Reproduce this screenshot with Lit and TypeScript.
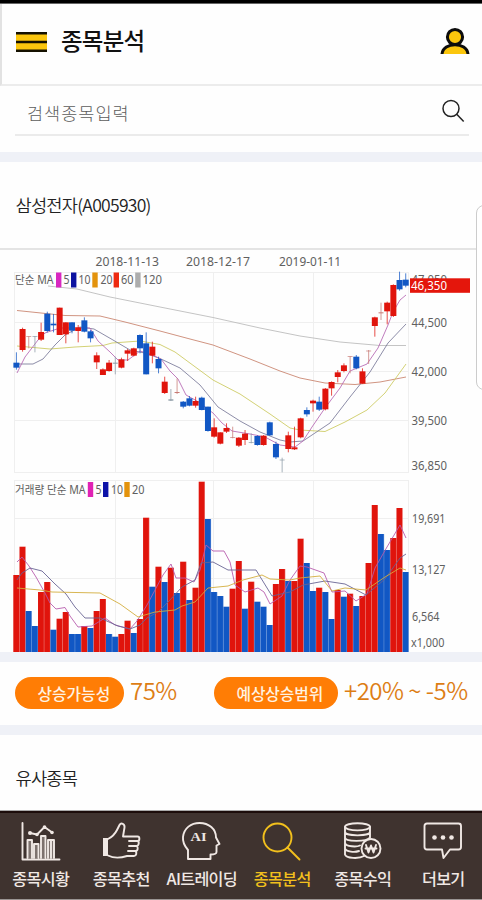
import { LitElement, html, svg, css } from "lit";
import { customElement, property } from "lit/decorators.js";
import { classMap } from "lit/directives/class-map.js";

type Side = "R" | "B";
type Pt = [number, number];

const RED = "#e0140c";
const BLUE = "#1157c4";
const LEFT = 13.3;
const STEP = 6.18;
const BASE = 652;

const volumes: [Side, number][] = [
  ["R", 575], ["R", 546.7], ["B", 611], ["B", 626], ["R", 592], ["R", 582], ["B", 629.7], ["R", 618.7],
  ["R", 612], ["B", 634], ["B", 634], ["R", 626], ["B", 628], ["R", 611], ["R", 599], ["B", 634],
  ["B", 636.7], ["R", 634], ["R", 620.7], ["B", 633], ["R", 619], ["R", 517.7], ["B", 586.7], ["R", 566.7],
  ["B", 582], ["R", 567.7], ["B", 593], ["R", 561.7], ["B", 600], ["R", 587.7], ["R", 481.7], ["B", 519],
  ["B", 592], ["B", 596], ["B", 606.7], ["R", 588.7], ["R", 561], ["B", 608.7], ["R", 581.7], ["B", 601.7],
  ["B", 606.7], ["B", 625], ["R", 584], ["R", 569], ["B", 581], ["R", 581], ["R", 538.7], ["B", 563],
  ["B", 591], ["R", 587.7], ["B", 592], ["B", 619], ["R", 590], ["B", 596.7], ["R", 593.7], ["B", 606],
  ["R", 596], ["R", 563], ["R", 505], ["B", 534], ["B", 550], ["R", 538], ["R", 508], ["B", 572],
];

/* side, body top, body bottom, wick top, wick bottom; thirds of a pixel below y=245 */
const candles: [Side | "r" | "g", number, number, number, number][] = [
  ["B", 353, 368, 322, 374], ["R", 252, 315, 248, 320], ["r", 274, 276, 274, 310], ["g", 274, 276, 273, 322],
  ["R", 261, 284, 233, 288], ["B", 206, 258, 200, 262], ["B", 236, 241, 207, 262], ["R", 188, 270, 188, 270],
  ["R", 232, 268, 232, 295], ["B", 232, 257, 232, 265], ["R", 247, 258, 240, 292], ["B", 226, 260, 217, 262],
  ["B", 259, 280, 255, 292], ["R", 331, 352, 322, 372], ["R", 373, 390, 370, 390], ["R", 353, 378, 345, 380],
  ["g", 353, 356, 335, 388], ["R", 343, 368, 338, 370], ["R", 316, 326, 312, 348], ["R", 310, 332, 308, 334],
  ["B", 270, 310, 268, 325], ["B", 295, 388, 262, 388], ["R", 305, 332, 290, 355], ["B", 342, 370, 335, 385],
  ["R", 410, 444, 395, 447], ["g", 463, 467, 432, 468], ["r", 441, 444, 400, 447], ["B", 470, 485, 468, 490],
  ["B", 460, 482, 453, 484], ["R", 468, 482, 455, 488], ["B", 458, 495, 455, 496], ["B", 485, 558, 485, 560],
  ["R", 547, 575, 520, 578], ["R", 562, 596, 562, 598], ["R", 549, 560, 535, 564], ["r", 576, 578, 545, 580],
  ["R", 578, 602, 576, 606], ["R", 566, 585, 555, 600], ["g", 592, 594, 565, 595], ["B", 573, 600, 571, 602],
  ["R", 572, 600, 570, 602], ["B", 532, 571, 530, 573], ["B", 597, 637, 590, 642], ["g", 644, 646, 638, 682],
  ["R", 571, 612, 560, 622], ["R", 607, 613, 545, 615], ["R", 520, 577, 518, 580], ["B", 495, 508, 487, 515],
  ["R", 467, 475, 464, 500], ["B", 470, 494, 455, 498], ["R", 431, 493, 429, 496], ["R", 411, 430, 409, 452],
  ["R", 382, 396, 375, 412], ["R", 361, 378, 355, 382], ["r", 334, 336, 334, 385], ["B", 335, 370, 330, 373],
  ["R", 379, 416, 370, 416], ["r", 317, 319, 315, 357], ["R", 217, 243, 215, 275], ["r", 202, 205, 173, 225],
  ["R", 173, 199, 170, 238], ["R", 120, 213, 118, 216], ["B", 105, 133, 80, 137], ["B", 104, 122, 85, 127],
];

const priceLines: [string, Pt[]][] = [
  ["#bcbcbc", [[48, 286], [77, 289], [110, 297], [160, 307], [213, 317.5], [260, 328], [300, 336], [340, 342], [380, 345.5], [406, 345.5]]],
  ["#c98570", [[17, 310.5], [65, 315.5], [100, 316], [125, 322], [160, 331], [190, 339], [213, 345], [250, 359], [280, 371], [300, 378], [325, 383], [355, 384.5], [380, 382], [406, 377]]],
  ["#cdcb62", [[17, 346], [50, 349], [75, 347], [103, 345.5], [112, 343], [140, 341], [160, 344.5], [175, 352], [213, 380], [240, 394], [270, 414], [290, 428], [300, 430], [325, 431.5], [345, 422], [367, 410], [385, 393], [406, 364]]],
  ["#7d7d9c", [[17, 364], [33, 364], [43, 359], [55, 345], [65, 335], [80, 327], [94, 329], [113, 340], [130, 350], [147, 353.5], [161, 359], [180, 368], [200, 385], [218, 407], [240, 421], [260, 432], [280, 440], [290, 442], [303, 441], [330, 423], [350, 397], [370, 372], [388, 343], [406, 324]]],
  ["#b76bb5", [[17, 373], [25, 357], [38, 340], [45, 333], [60, 328], [75, 328], [90, 328], [98, 341], [110, 352], [118, 360], [128, 360], [140, 351], [150, 354], [161, 359], [170, 371], [178, 379], [186, 395], [197, 401], [213, 413], [222, 423], [232, 431], [250, 434], [265, 437], [280, 445], [295, 447], [303, 441], [312, 427], [325, 408], [340, 388], [350, 371], [367, 364], [378, 348], [388, 325], [393, 312], [400, 300], [406, 295]]],
];

const volumeLines: [string, Pt[]][] = [
  ["#b65aac", [[17, 562], [22, 557], [29, 566], [36, 577], [45, 593], [50, 603], [56, 609], [65, 607.5], [70, 616], [78, 627], [92, 626], [105, 618], [115, 625], [130, 629], [137, 621], [147, 605], [155, 590], [163, 575], [171, 564], [176, 578], [185, 578], [194, 582], [200, 570], [206, 545], [213, 551], [224, 551], [230, 562], [235, 585], [245, 592], [258, 588], [264, 592], [270, 604], [282, 596], [290, 580], [300, 566], [307, 567], [324, 573], [332, 592], [345, 591], [356, 601], [367, 594], [375, 568], [387, 547], [400, 525], [406, 538]]],
  ["#666292", [[17, 580], [22, 573], [30, 568], [42, 571], [55, 584], [66, 594], [75, 607], [85, 618], [100, 618], [118, 626], [130, 629], [140, 625], [147, 618], [158, 612], [170, 600], [182, 587], [195, 580], [201, 563], [213, 562], [228, 570], [256, 570], [272, 596], [290, 592], [303, 585], [325, 581], [345, 584], [366, 595], [385, 579], [400, 558], [406, 554]]],
  ["#d3ac3a", [[17, 588], [40, 590], [52, 592], [100, 593], [120, 604], [138, 617], [155, 612], [175, 610], [182, 606], [195, 602], [208, 588], [228, 586], [243, 580], [262, 575], [270, 579], [290, 580], [300, 578], [320, 576], [332, 591], [345, 588], [366, 590], [385, 577], [400, 568], [406, 570]]],
];

/* text, x, baseline, width */
const axisTexts: [string, number, number, number][] = [
  ["2018-11-13", 95.5, 266, 63.5],
  ["2018-12-17", 186, 266, 64],
  ["2019-01-11", 279, 266, 62],
  ["44,500", 411.5, 327, 35.5],
  ["42,000", 411.5, 376, 35.5],
  ["39,500", 411.5, 425, 35.5],
  ["36,850", 411.5, 470, 35.5],
  ["19,691", 412, 523, 33.5],
  ["13,127", 412, 574, 33.5],
  ["6,564", 412, 621, 27.5],
  ["x1,000", 411, 646.5, 33.5],
  ["단순 MA", 15, 284, 38.5],
  ["5", 63.5, 284, 6],
  ["10", 78.5, 284, 12],
  ["20", 100.5, 284, 12],
  ["60", 121, 284, 12.5],
  ["120", 142.5, 284, 19.5],
  ["거래량 단순 MA", 15, 494, 70.5],
  ["5", 95.5, 494, 6],
  ["10", 111, 494, 12],
  ["20", 132, 494, 12.5],
];

const swatches: [string, number, number][] = [
  ["#d828c0", 56, 272.5], ["#0c12a0", 71, 272.5], ["#e3930d", 92.3, 272.5], ["#ee2a10", 113.6, 272.5], ["#adadad", 135.2, 272.5],
  ["#e022b4", 87.8, 482], ["#0c12a8", 103, 482], ["#e3930d", 124.3, 482],
];

const toPoints = (pts: Pt[]) => pts.map((p) => p.join(",")).join(" ");

@customElement("stock-chart")
class StockChart extends LitElement {
  static styles = css`
    :host { display: block; height: 402px; }
    svg { display: block; width: 482px; height: 402px; }
    text { font-family: "Noto Sans", "Noto Sans CJK KR", sans-serif; font-size: 11.7px; fill: #606060; }
    .grid { stroke: #efefef; stroke-width: 1; }
    .line { fill: none; stroke-width: 1; stroke-linejoin: round; opacity: 0.88; }
    .price { fill: #fff; font-size: 12px; }
  `;

  private candle(i: number) {
    const [side, top, bottom, wickTop, wickBottom] = candles[i];
    const x = LEFT + STEP * (i + 0.5);
    const y = (v: number) => 245 + v / 3;
    const fill = { R: RED, B: BLUE, r: "#c77a74", g: "#8b9aa5" }[side];
    const w = side === "r" || side === "g" ? 5 : 6;
    return svg`
      <rect x=${x - 0.5} y=${y(wickTop)} width="1" height=${(wickBottom - wickTop) / 3} fill=${fill} opacity="0.75"></rect>
      <rect x=${x - w / 2} y=${y(top)} width=${w} height=${(bottom - top) / 3} fill=${fill}></rect>`;
  }

  render() {
    return html`<svg viewBox="0 250 482 402">
      ${[14.5, 115.5, 213.5, 313.5, 408.5].map((x) => svg`
        <line class="grid" x1=${x} x2=${x} y1="272" y2="472"></line>
        <line class="grid" x1=${x} x2=${x} y1="480" y2="652"></line>`)}
      ${[272.5, 322.5, 371.5, 420.5, 472.5, 480.5, 518.5, 578.5].map((y) => svg`
        <line class="grid" x1="14" x2="409" y1=${y} y2=${y}></line>`)}
      ${volumes.map(([side, top], i) => svg`
        <rect x=${LEFT + STEP * i} y=${top} width=${STEP} height=${BASE - top} fill=${side === "R" ? RED : BLUE}></rect>
        <rect x=${LEFT + STEP * (i + 1) - 0.5} y=${top} width="0.7" height=${BASE - top} fill="#fff" opacity="0.35"></rect>`)}
      ${volumeLines.map(([c, p]) => svg`<polyline class="line" stroke=${c} points=${toPoints(p)}></polyline>`)}
      ${priceLines.map(([c, p]) => svg`<polyline class="line" stroke=${c} points=${toPoints(p)}></polyline>`)}
      ${candles.map((_, i) => this.candle(i))}
      ${swatches.map(([c, x, y]) => svg`<rect x=${x} y=${y} width="5.4" height="15" fill=${c}></rect>`)}
      ${axisTexts.map(([t, x, y, w]) => svg`<text x=${x} y=${y} textLength=${w} lengthAdjust="spacingAndGlyphs">${t}</text>`)}
      <text x="411.5" y="283.5" textLength="35.5" lengthAdjust="spacingAndGlyphs">47,050</text>
      <rect x="410" y="278.3" width="60" height="14.5" fill="#e4160c"></rect>
      <text class="price" x="411" y="290.3" textLength="36" lengthAdjust="spacingAndGlyphs">46,350</text>
    </svg>`;
  }
}

const navIcons: Record<string, unknown> = {
  chart: svg`
    <path d="M2.5 1V37.5H39.5"></path>
    <path class="bars" d="M7.5 36V18H12V36M14 36V22H18.500V36M21 36V14H25.500V36M28 36V18H34V36M31 19V36"></path>
    <path d="M10 11L17 12.500L24.500 5L31.500 10"></path>
    <g class="solid"><circle cx="10" cy="11" r="2"></circle><circle cx="17" cy="12.500" r="1.800"></circle><circle cx="24.500" cy="5" r="1.800"></circle><circle cx="32" cy="10.500" r="1.800"></circle></g>`,
  thumb: svg`
    <path class="solid" d="M2 16H7V34H2Z"></path>
    <path d="M7 17C11 15 14 12 16 8L18.500 3C20 0.500 24 1.500 23.500 5.500L22 14.500H36.500C39 14.500 39 19 36.500 19H28M36.500 19C38.500 19.500 38 24 35.500 24H28M35.500 24C37.500 25 37 29 34.500 29H27M34.500 29C36 30.500 35.500 34 33 34H26C18 36.500 13 36.500 7 33.500"></path>`,
  ai: svg`
    <path d="M7 37V28C3.500 24 1.500 20 2 15C3 6 10 1 18.500 1C28 1 35 7 35 15.500L38.500 22L35.500 23.500V30C35.500 32 34 32.500 29.500 32.500V37Z"></path>
    <text class="ai" x="17.500" y="18.500" text-anchor="middle" textLength="16" lengthAdjust="spacingAndGlyphs">AI</text>`,
  search: svg`<circle cx="15.500" cy="15.500" r="14"></circle><path d="M25.500 25.500L37.500 37.500"></path>`,
  coins: svg`
    <ellipse cx="15.500" cy="4.800" rx="12.500" ry="3.600"></ellipse>
    <path d="M3 5V10C3 14.500 28 14.500 28 10V5M3 10V15.500C3 20 25 20 28 15.500V10M3 15.500V21C4 25 15 25 18 23.500M3 21V26.500C4 30 13 30.500 17 29M3 26.500V32.500C4 36.500 17 37 22 34"></path>
    <circle cx="29" cy="26.500" r="9.500" class="coin"></circle>
    <path d="M24 23L26.500 30.500L29 23.500L31.500 30.500L34 23M23.500 26.500H34.500"></path>`,
  chat: svg`
    <path d="M4 1.500H35.500Q38 1.500 38 4V25Q38 27.500 35.500 27.500H27L20.500 36L19 27.500H4Q1.500 27.500 1.500 25V4Q1.500 1.500 4 1.500Z"></path>
    <g class="solid"><circle cx="11.500" cy="15.500" r="2.300"></circle><circle cx="20" cy="15.500" r="2.300"></circle><circle cx="28.500" cy="15.500" r="2.300"></circle></g>`,
};

@customElement("nav-item")
class NavItem extends LitElement {
  @property() icon = "";
  @property() label = "";
  @property({ type: Boolean }) active = false;

  static styles = css`
    :host { display: block; }
    .item { display: flex; flex-direction: column; align-items: center; color: #f0e8e4; padding-top: 11px; }
    .active { color: #f2c01d; }
    svg { width: 40px; height: 39px; fill: none; stroke: currentColor; stroke-width: 1.9; stroke-linejoin: round; stroke-linecap: round; overflow: visible; }
    .bars { fill: rgba(240, 232, 228, 0.35); }
    .solid { fill: currentColor; stroke: none; }
    .coin { fill: #3f332f; }
    .ai { font: bold 13px "Liberation Serif", serif; fill: currentColor; stroke: none; }
    .label { font-size: 16.2px; line-height: 22px; font-weight: 500; letter-spacing: -0.7px; white-space: nowrap; margin: 6px 0 0 1px; }
  `;

  render() {
    return html`<div class=${classMap({ item: true, active: this.active })}>
      <svg viewBox="0 0 40 39">${navIcons[this.icon]}</svg>
      <span class="label">${this.label}</span>
    </div>`;
  }
}

@customElement("app-root")
class AppRoot extends LitElement {
  static styles = css`
    :host {
      display: flex; flex-direction: column; position: relative; width: 482px; height: 900px; overflow: hidden;
      background: #fefefe; color: #222; font-family: "Noto Sans CJK KR", "Noto Sans", sans-serif; box-sizing: border-box;
    }
    * { box-sizing: border-box; }
    .status { height: 4px; flex: none; background: #000; border-bottom: 1px solid #666; }
    header { height: 82px; flex: none; display: flex; align-items: flex-start; border-left: 2px solid #e2e2e2; border-bottom: 2px solid #ececec; padding: 0 12px 0 14px; }
    .menu { width: 31px; height: 20px; margin-top: 28px; }
    h1 { margin: 19px 0 0 14px; flex: 1; font-size: 23.5px; line-height: 34px; font-weight: 500; letter-spacing: -0.8px; color: #111; }
    .user { width: 30px; height: 28px; margin-top: 23px; }
    .search { height: 50px; flex: none; margin: 0 13px 0 15px; border-bottom: 2px solid #ebebeb; display: flex; align-items: flex-start; padding: 0 4px 0 12px; }
    .search span { flex: 1; font-size: 17.5px; line-height: 26px; margin-top: 14px; color: #5c5c5c; font-weight: 300; letter-spacing: 1px; }
    .search svg { width: 24px; height: 24px; margin-top: 13px; }
    .band { height: 10px; flex: none; background: #eff1f7; }
    .gap { height: 16px; flex: none; }
    h2 { margin: 0; flex: none; font-size: 17.6px; font-weight: 350; color: #222; line-height: 26px; letter-spacing: -0.75px; padding-left: 15.5px; }
    .stock { height: 88px; padding-top: 30px; border-bottom: 2px solid #e4e4e4; }
    .stats { height: 63px; flex: none; display: flex; align-items: flex-start; padding: 15px 0 0 15px; color: #dd7d14; }
    .pill { height: 32px; border-radius: 16px; background: #ff7d05; color: #fff3e2; font-size: 15.8px; font-weight: 500; line-height: 33px; letter-spacing: 0px; white-space: nowrap; padding-left: 22.5px; }
    .up { width: 109px; }
    .range { width: 124px; margin-left: 36px; letter-spacing: -0.1px; }
    .val { font-size: 24px; line-height: 26px; font-weight: 350; letter-spacing: -0.5px; margin-left: 6px; white-space: nowrap; }
    .first { width: 48px; }
    .similar { padding-top: 30px; flex: 1; }
    nav { height: 90px; flex: none; display: grid; grid-template-columns: repeat(6, 80.5px); background: #3f332f; border-top: 1px solid #aaa; border-bottom: 1px solid #9a9492; box-shadow: inset 0 2px 0 #1c0d0b; }
    .drawer { position: absolute; right: -10px; top: 205px; width: 16px; height: 185px; border: 1.5px solid #ccc; border-radius: 8px; background: #fff; }
  `;

  render() {
    return html`
      <div class="status"></div>
      <header>
        <svg class="menu" viewBox="0 0 31 20">
          <rect width="31" height="20" fill="#fbc60d"></rect>
          <path d="M0 1.200H31M0 10H31M0 18.800H31" stroke="#151100" stroke-width="2.400"></path>
        </svg>
        <h1>종목분석</h1>
        <svg class="user" viewBox="0 0 30 28">
          <path d="M2 27C3 14.500 27 14.500 28 27Z" fill="#fbc60d"></path>
          <path d="M2 27C3 14.500 27 14.500 28 27" fill="none" stroke="#0c0c0c" stroke-width="3"></path>
          <circle cx="15" cy="10" r="7.600" fill="#fbc60d" stroke="#0c0c0c" stroke-width="3"></circle>
        </svg>
      </header>
      <div class="search">
        <span>검색종목입력</span>
        <svg viewBox="0 0 24 24" fill="none" stroke="#222" stroke-width="1.500">
          <circle cx="10" cy="9.500" r="8"></circle><path d="M15.500 15L22.700 22.500"></path>
        </svg>
      </div>
      <div class="gap"></div>
      <div class="band"></div>
      <h2 class="stock">삼성전자(A005930)</h2>
      <stock-chart></stock-chart>
      <div class="band"></div>
      <div class="stats">
        <div class="pill up">상승가능성</div>
        <div class="val first">75%</div>
        <div class="pill range">예상상승범위</div>
        <div class="val">+20% ~ -5%</div>
      </div>
      <div class="band"></div>
      <h2 class="similar">유사종목</h2>
      <nav>
        <nav-item icon="chart" label="종목시황"></nav-item>
        <nav-item icon="thumb" label="종목추천"></nav-item>
        <nav-item icon="ai" label="AI트레이딩"></nav-item>
        <nav-item icon="search" label="종목분석" active></nav-item>
        <nav-item icon="coins" label="종목수익"></nav-item>
        <nav-item icon="chat" label="더보기"></nav-item>
      </nav>
      <div class="drawer"></div>
    `;
  }
}
